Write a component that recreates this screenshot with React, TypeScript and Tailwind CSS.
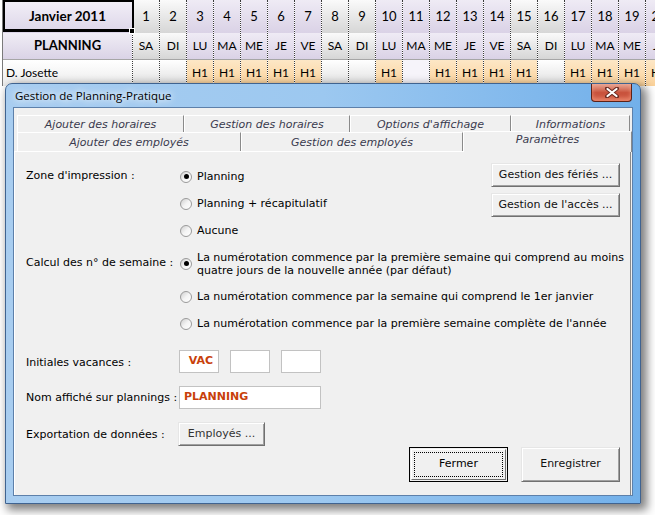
import React from "react";

const DAYS: [number, string][] = [
  [1, "SA"], [2, "DI"], [3, "LU"], [4, "MA"], [5, "ME"], [6, "JE"], [7, "VE"],
  [8, "SA"], [9, "DI"], [10, "LU"], [11, "MA"], [12, "ME"], [13, "JE"], [14, "VE"],
  [15, "SA"], [16, "DI"], [17, "LU"], [18, "MA"], [19, "ME"], [20, "JE"],
];

const JOSETTE = new Set([3, 4, 5, 6, 7, 10, 12, 13, 14, 15, 17, 18, 19, 20]);

function Sheet() {
  return (
    <div className="flex h-[86px] overflow-hidden font-['Lato',sans-serif] text-black">
      <div className="w-[3px] shrink-0 border-r border-[#7a7a7a] bg-white" />
      {/* column A */}
      <div className="relative flex w-[130px] shrink-0 flex-col border-r border-dotted border-[#3c3c3c]">
        <div className="flex h-[33px] items-center justify-center bg-gradient-to-b from-[#f3f0f8] to-[#dcd5e8] text-[13.5px] font-bold">
          Janvier 2011
        </div>
        <div className="flex h-[27px] items-center justify-center border-b border-[#a6a6a6] bg-gradient-to-b from-[#f0edf5] to-[#dad3e6] text-[13px] font-bold">
          PLANNING
        </div>
        <div className="flex h-[26px] items-center bg-gradient-to-b from-white to-[#ececec] pl-[3px] text-[12px]">
          D. Josette
        </div>
        {/* selected cell */}
        <div className="pointer-events-none absolute left-0 top-0 h-[32px] w-[131px] border-2 border-b-[3px] border-black" />
        <div className="absolute left-[126px] top-[28px] h-[6px] w-[6px] border border-white bg-black" />
      </div>
      {DAYS.map(([n, d]) => {
        const we = d === "SA" || d === "DI";
        const hdr = we
          ? "bg-gradient-to-b from-[#fafafa] to-[#d6d6d6]"
          : "bg-gradient-to-b from-[#efebf5] to-[#dad2e6]";
        const has = JOSETTE.has(n);
        const cell = has
          ? "bg-gradient-to-b from-[#fde7c6] to-[#fbd29a]"
          : we
          ? "bg-gradient-to-b from-white to-[#e0e0e0]"
          : "bg-[#f6f4fa]";
        return (
          <div key={n} className="flex w-[27px] shrink-0 flex-col border-r border-dotted border-[#3c3c3c]">
            <div className={`flex h-[33px] items-center justify-center text-[13px] ${hdr}`}>{n}</div>
            <div className={`flex h-[27px] items-center justify-center border-b border-[#a6a6a6] text-[12px] ${hdr}`}>{d}</div>
            <div className={`flex h-[26px] items-center justify-center text-[12px] ${cell}`}>{has ? "H1" : ""}</div>
          </div>
        );
      })}
    </div>
  );
}

function Radio({ checked }: { checked?: boolean }) {
  return (
    <span className="flex h-[12px] w-[12px] shrink-0 items-center justify-center rounded-full border border-[#9a9a9a] bg-gradient-to-br from-[#cfcfcf] via-[#f4f4f4] to-white">
      {checked && <span className="h-[5px] w-[5px] rounded-full bg-black" />}
    </span>
  );
}

function Option({ checked, children, h = "h-[27px]" }: { checked?: boolean; children: React.ReactNode; h?: string }) {
  return (
    <div className={`flex items-center gap-[5px] ${h}`}>
      <Radio checked={checked} />
      <span className="whitespace-nowrap leading-[13px]">{children}</span>
    </div>
  );
}

function Btn({ children, className = "" }: { children: React.ReactNode; className?: string }) {
  return (
    <button
      type="button"
      className={`flex items-center justify-center border border-t-[#e6e6e6] border-l-[#e6e6e6] border-r-[#707070] border-b-[#707070] bg-[#f0f0f0] shadow-[inset_1px_1px_0_#ffffff,inset_-1px_-1px_0_#a0a0a0] text-[#111] ${className}`}
    >
      {children}
    </button>
  );
}

function Field({ value, className = "" }: { value?: string; className?: string }) {
  return (
    <div className={`flex h-[23px] items-center border border-[#c2c2c2] bg-white pl-[4px] text-[11px] font-bold text-[#c8400a] ${className}`}>
      {value}
    </div>
  );
}

function Tab({ label, className = "" }: { label: string; className?: string }) {
  return (
    <div
      className={`flex items-center justify-center border-l border-t border-r border-l-white border-t-white border-r-[#8a8a8a] bg-[#f0f0f0] text-[11px] italic text-[#3a3a4e] ${className}`}
    >
      {label}
    </div>
  );
}

function Dialog() {
  return (
    <div className="absolute left-[5px] top-[83px] flex h-[421px] w-[636px] flex-col rounded-t-[7px] border border-[#3f6390] bg-gradient-to-r from-[#a8cdf0] via-[#9cc8f0] to-[#72b0ea] px-[7px] pb-[7px] shadow-[4px_4px_10px_2px_rgba(0,0,0,0.5)]">
      {/* title bar */}
      <div className="flex h-[23px] items-center pl-[2px] font-['Open_Sans',sans-serif] text-[11.5px] text-black [text-shadow:0_0_6px_#ffffff,0_0_10px_#ffffff]">
        Gestion de Planning-Pratique
      </div>
      <div className="absolute right-[8px] top-0 flex h-[18px] w-[41px] items-center justify-center rounded-b-[4px] border border-t-0 border-[#5c2218] bg-gradient-to-b from-[#e9a897] via-[#c9533d] to-[#c8503a] shadow-[inset_0_-3px_4px_rgba(255,170,140,0.6)]">
        <svg width="14" height="11" viewBox="0 0 14 11">
          <path d="M2 1.5 L12 9.5 M12 1.5 L2 9.5" stroke="#6a2a20" strokeWidth="4" strokeLinecap="round" />
          <path d="M2.5 2 L11.5 9 M11.5 2 L2.5 9" stroke="#ffffff" strokeWidth="2.2" strokeLinecap="round" />
        </svg>
      </div>

      {/* client area */}
      <div className="flex flex-1 flex-col border border-[#5d80aa] bg-[#f0f0f0] font-['DejaVu_Sans',sans-serif] text-[11px] text-black">
        <div className="mt-[7px] flex flex-col">
          <div className="ml-[3px] flex h-[18px]">
            <Tab label="Ajouter des horaires" className="w-[167px] pt-[2px]" />
            <Tab label="Gestion des horaires" className="w-[166px] pt-[2px]" />
            <Tab label="Options d'affichage" className="w-[161px] pt-[2px]" />
            <Tab label="Informations" className="w-[119px] pt-[2px]" />
          </div>
          <div className="ml-[3px] flex h-[18px] items-end">
            <Tab label="Ajouter des employés" className="h-[19px] w-[224px] pt-[2px]" />
            <Tab label="Gestion des employés" className="h-[19px] w-[222px] pt-[2px]" />
            <Tab label="Paramètres" className="relative z-10 -mb-[1px] h-[21px] flex-1 pb-[3px]" />
          </div>
        </div>

        {/* tab page */}
        <div className="mr-[1px] flex flex-1 flex-col border-l border-t border-r border-l-white border-t-white border-r-[#8a8a8a] pl-[11px] pr-[10px] pt-[11px]">
          <div className="flex">
            <div className="flex h-[27px] w-[154px] shrink-0 items-center">Zone d'impression :</div>
            <div className="flex flex-1 flex-col">
              <Option checked>Planning</Option>
              <Option>Planning + récapitulatif</Option>
              <Option>Aucune</Option>
            </div>
            <div className="flex flex-col gap-[6px]">
              <Btn className="h-[24px] w-[129px]">Gestion des fériés ...</Btn>
              <Btn className="h-[24px] w-[129px]">Gestion de l'accès ...</Btn>
            </div>
          </div>

          <div className="flex">
            <div className="flex h-[39px] w-[154px] shrink-0 items-center">Calcul des n° de semaine :</div>
            <div className="flex flex-col">
              <Option checked h="h-[39px]">
                La numérotation commence par la première semaine qui comprend au moins
                <br />
                quatre jours de la nouvelle année (par défaut)
              </Option>
              <Option>La numérotation commence par la semaine qui comprend le 1er janvier</Option>
              <Option>La numérotation commence par la première semaine complète de l'année</Option>
            </div>
          </div>

          <div className="mt-[13px] flex items-center">
            <div className="w-[153px] shrink-0 pt-[3px]">Initiales vacances :</div>
            <div className="flex gap-[11px]">
              <Field value="VAC" className="w-[40px] justify-center pl-0" />
              <Field className="w-[40px]" />
              <Field className="w-[40px]" />
            </div>
          </div>

          <div className="mt-[13px] flex items-center">
            <div className="w-[153px] shrink-0 pt-[2px]">Nom affiché sur plannings :</div>
            <Field value="PLANNING" className="w-[142px]" />
          </div>

          <div className="mt-[13px] flex items-center">
            <div className="w-[152px] shrink-0 pt-[2px]">Exportation de données :</div>
            <Btn className="h-[24px] w-[87px] text-[#333]">Employés ...</Btn>
          </div>

          <div className="mt-[1px] flex justify-end gap-[13px]">
            <button
              type="button"
              className="flex h-[35px] w-[99px] items-center justify-center border border-black bg-[#f0f0f0] p-[1px]"
            >
              <span className="flex h-full w-full items-center justify-center border border-t-white border-l-white border-r-[#707070] border-b-[#707070] p-[2px]">
                <span className="flex h-full w-full items-center justify-center border border-dotted border-black">
                  Fermer
                </span>
              </span>
            </button>
            <Btn className="h-[35px] w-[99px]">Enregistrer</Btn>
          </div>
        </div>
      </div>
    </div>
  );
}

export default function App() {
  return (
    <div className="relative h-[515px] w-[655px] overflow-hidden bg-white">
      <Sheet />
      <Dialog />
    </div>
  );
}
